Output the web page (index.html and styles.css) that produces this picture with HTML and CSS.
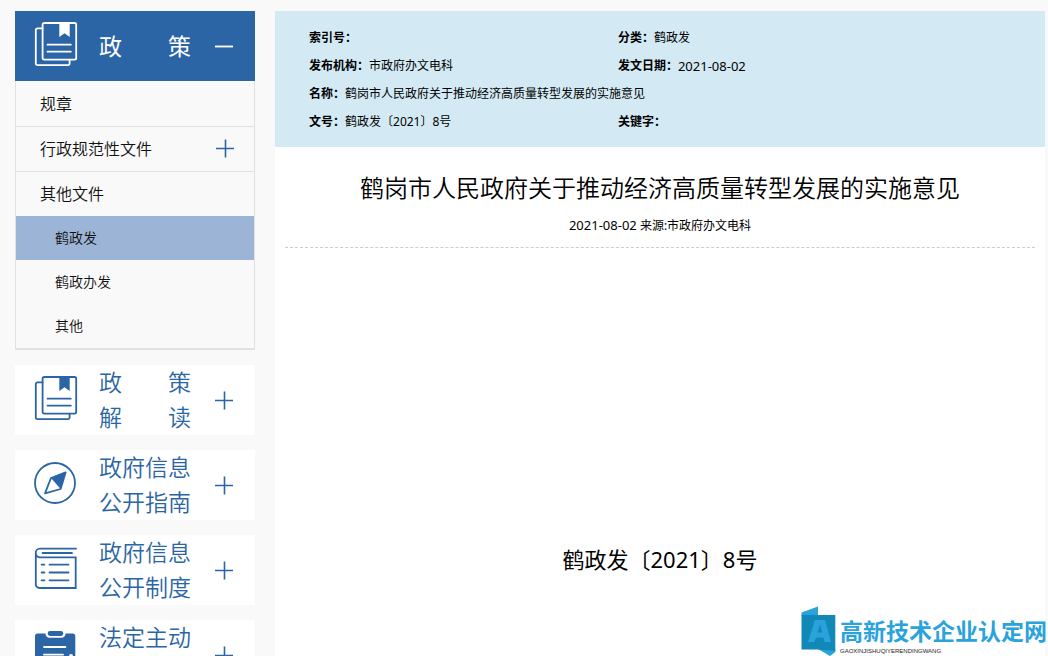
FILE: index.html
```html
<!DOCTYPE html>
<html lang="zh-CN">
<head>
<meta charset="utf-8">
<title>鹤岗市人民政府关于推动经济高质量转型发展的实施意见</title>
<link rel="stylesheet" href="styles.css">
</head>
<body>
<svg class="sprite" aria-hidden="true">
  <symbol id="book" viewBox="0 0 44 48">
    <g fill="none" stroke="currentColor" stroke-width="1.8" stroke-linecap="round" stroke-linejoin="round">
      <rect x="8.6" y="1" width="33.6" height="36.6" rx="1.6"/>
      <path d="M8.6 6.4H3.4a1.6 1.6 0 0 0-1.6 1.6V41.6a1.6 1.6 0 0 0 1.6 1.6H34a1.6 1.6 0 0 0 1.6-1.6V37.6M13.5 22.7H36.8M13.5 29.7H36.8"/>
    </g>
    <path fill="currentColor" d="M25.3 1H35.7V15L30.5 11.2 25.3 15Z"/>
  </symbol>
  <symbol id="compass" viewBox="0 0 44 48">
    <g fill="none" stroke="currentColor" stroke-width="1.8" stroke-linejoin="round">
      <circle cx="21" cy="22" r="20"/>
      <path d="M31.6 11.4 17 17 11 32.4 26.6 28Z"/>
    </g>
    <path fill="currentColor" d="M32 11 17 17 26.6 28Z"/>
  </symbol>
  <symbol id="notebook" viewBox="0 0 44 48">
    <g fill="none" stroke="currentColor" stroke-width="1.8" stroke-linecap="round">
      <path d="M42 2.7H6A4.3 4.3 0 0 0 6 11.3H41.7V42H5.4A3.6 3.6 0 0 1 1.8 38.4V7M8.5 7H38M15.5 18.7H34.5M15.5 26.5H34.5M15.5 34.3H34.5M7.6 18.7H10.4M7.6 26.5H10.4M7.6 34.3H10.4"/>
    </g>
  </symbol>
  <symbol id="clipboard" viewBox="0 -1 44 48">
    <path fill="currentColor" d="M3.6 1.5H11.5A4 4 0 0 0 15.5 5.7H27.5A4 4 0 0 0 31.5 1.5H38.7A2.6 2.6 0 0 1 41.3 4.1V42H1V4.1A2.6 2.6 0 0 1 3.6 1.5Z"/>
    <rect x="13.7" y="-1" width="15.6" height="5" rx="2.4" fill="currentColor"/>
    <path d="M10 15H31.4M10 22.7H29" stroke="#fff" stroke-width="1.8" stroke-linecap="round"/>
    <circle cx="37" cy="24" r="2" fill="#fff"/>
  </symbol>
  <symbol id="plus" viewBox="0 0 20 20">
    <path d="M1 10.5H19M10.5 1.5V19.5" stroke="currentColor" stroke-width="1.6" fill="none"/>
  </symbol>
  <symbol id="minus" viewBox="0 0 20 20">
    <path d="M1 10.5H19" stroke="currentColor" stroke-width="1.8" fill="none"/>
  </symbol>
</svg>

<div class="page">
  <nav class="sidebar" aria-label="政府信息公开">
    <section class="group">
      <button class="category category-open" type="button" aria-expanded="true">
        <svg class="category-icon"><use href="#book"/></svg>
        <span class="category-label"><span>政 策</span></span>
        <svg class="toggle"><use href="#minus"/></svg>
      </button>
      <ul class="menu">
        <li><a class="menu-link" href="#">规章</a></li>
        <li><a class="menu-link" href="#">行政规范性文件<svg class="toggle menu-toggle"><use href="#plus"/></svg></a></li>
        <li><a class="menu-link" href="#">其他文件</a>
          <ul class="submenu">
            <li><a class="submenu-link current" href="#">鹤政发</a></li>
            <li><a class="submenu-link" href="#">鹤政办发</a></li>
            <li><a class="submenu-link" href="#">其他</a></li>
          </ul>
        </li>
      </ul>
    </section>
    <button class="category" type="button">
      <svg class="category-icon"><use href="#book"/></svg>
      <span class="category-label"><span>政 策</span><span>解 读</span></span>
      <svg class="toggle"><use href="#plus"/></svg>
    </button>
    <button class="category" type="button">
      <svg class="category-icon"><use href="#compass"/></svg>
      <span class="category-label"><span>政府信息</span><span>公开指南</span></span>
      <svg class="toggle"><use href="#plus"/></svg>
    </button>
    <button class="category" type="button">
      <svg class="category-icon"><use href="#notebook"/></svg>
      <span class="category-label"><span>政府信息</span><span>公开制度</span></span>
      <svg class="toggle"><use href="#plus"/></svg>
    </button>
    <button class="category" type="button">
      <svg class="category-icon"><use href="#clipboard"/></svg>
      <span class="category-label"><span>法定主动</span><span>公开内容</span></span>
      <svg class="toggle"><use href="#plus"/></svg>
    </button>
  </nav>

  <main class="content">
    <dl class="info">
      <div><dt>索引号：</dt><dd></dd></div>
      <div><dt>分类：</dt><dd>鹤政发</dd></div>
      <div><dt>发布机构：</dt><dd>市政府办文电科</dd></div>
      <div><dt>发文日期：</dt><dd><time>2021-08-02</time></dd></div>
      <div class="wide"><dt>名称：</dt><dd>鹤岗市人民政府关于推动经济高质量转型发展的实施意见</dd></div>
      <div><dt>文号：</dt><dd>鹤政发〔2021〕8号</dd></div>
      <div><dt>关键字：</dt><dd></dd></div>
    </dl>
    <article class="article">
      <header class="article-head">
        <h1>鹤岗市人民政府关于推动经济高质量转型发展的实施意见</h1>
        <p class="meta"><time>2021-08-02</time> 来源:市政府办文电科</p>
      </header>
      <p class="doc-number">鹤政发〔2021〕8号</p>
    </article>
  </main>
</div>

<div class="watermark">
  <svg class="mark" viewBox="0 0 36 50" aria-hidden="true">
    <path fill="#2aa3dc" d="M1.5 6.5 18 .5V10H1.5ZM18 43H35.3V46L30 50Z"/>
    <path fill="#1288b8" d="M1.5 9H35.3V45L18 43.5H1.5Z"/>
    <path fill="#2aa3dc" fill-rule="evenodd" d="M8 36 15 14H25L31 36H24.6L23.4 31.4H16L14.4 36ZM17.4 26.6H22.2L20.2 18.5Z"/>
  </svg>
  <div class="brand">
    <span class="brand-name">高新技术企业认定网</span>
    <span class="brand-latin">GAOXINJISHUQIYERENDINGWANG</span>
  </div>
</div>
</body>
</html>
```

FILE: styles.css
```css
* {
  box-sizing: border-box;
}

body {
  margin: 0;
  height: 100vh;
  overflow: hidden;
  background: #f9f9f9;
  color: #000;
  font-family: "Noto Sans", "Noto Sans CJK SC", sans-serif;
  font-size: 12px;
}

ul, dl, dd, p, h1 {
  margin: 0;
  padding: 0;
}

ul {
  list-style: none;
}

a {
  color: inherit;
  text-decoration: none;
}

.sprite {
  display: none;
}

.page {
  display: flex;
  gap: 20px;
  min-height: 100%;
  padding: 11px 3px 0 15px;
}

.sidebar {
  flex: none;
  display: flex;
  flex-direction: column;
  gap: 15px;
  width: 240px;
}

.category {
  display: flex;
  align-items: center;
  width: 100%;
  min-height: 70px;
  padding: 0 21px 0 19px;
  border: 0;
  background: #fff;
  color: #2b65a5;
  font: inherit;
  font-size: 23px;
  font-weight: 350;
  line-height: 35px;
}

.category-open {
  background: #2b65a5;
  color: #fff;
  font-weight: 400;
}

.category-icon {
  width: 44px;
  height: 48px;
}

.category-label {
  width: 92px;
  margin-left: 21px;
}

.category-label span {
  display: block;
  text-align: justify;
  text-align-last: justify;
}

.toggle {
  width: 20px;
  height: 20px;
  margin-left: auto;
}

.menu {
  border: 1px solid #e1e1e1;
  border-top: 0;
  border-bottom-width: 2px;
  font-size: 16px;
  font-weight: 350;
}

.menu > li + li {
  border-top: 1px solid #e1e1e1;
}

.menu-link {
  display: flex;
  align-items: center;
  height: 44px;
  padding: 0 19px 2px 24px;
  color: #111;
}

.menu > li:first-child .menu-link {
  height: 45px;
}

.menu-toggle {
  color: #2b65a5;
}

.submenu {
  font-size: 14px;
  line-height: 44px;
}

.submenu-link {
  display: block;
  padding-left: 39px;
  color: #111;
}

.current {
  background: #9cb5d6;
}

.content {
  flex: 1;
  display: flex;
  flex-direction: column;
  min-width: 0;
}

.info {
  display: grid;
  grid-template-columns: 11fr 14fr;
  grid-auto-rows: 28px;
  padding: 13px 34px 11px;
  background: #d3eaf4;
  line-height: 28px;
}

.info div {
  display: flex;
}

.info .wide {
  grid-column: 1 / -1;
}

dt {
  font-weight: 700;
}

time {
  font-size: 13px;
}

.article {
  flex: 1;
  padding: 19px 10px 0;
  background: #fff;
  text-align: center;
}

.article-head {
  padding-bottom: 6px;
  border-bottom: 1px dashed #ccc;
}

h1 {
  font-size: 24px;
  font-weight: 350;
  line-height: 44px;
}

.meta {
  line-height: 30px;
}

.doc-number {
  margin-top: 295px;
  font-size: 22px;
  line-height: 32px;
}

.watermark {
  position: absolute;
  right: 1px;
  bottom: 0;
  display: flex;
  gap: 4px;
}

.mark {
  width: 36px;
  height: 50px;
}

.brand {
  display: flex;
  flex-direction: column;
  padding-top: 8px;
  white-space: nowrap;
}

.brand-name {
  color: #2aa3dc;
  font-size: 23px;
  font-weight: 700;
  line-height: 34px;
}

.brand-latin {
  color: #222;
  font-family: "Liberation Sans", sans-serif;
  font-size: 6px;
  line-height: 6px;
}
```
